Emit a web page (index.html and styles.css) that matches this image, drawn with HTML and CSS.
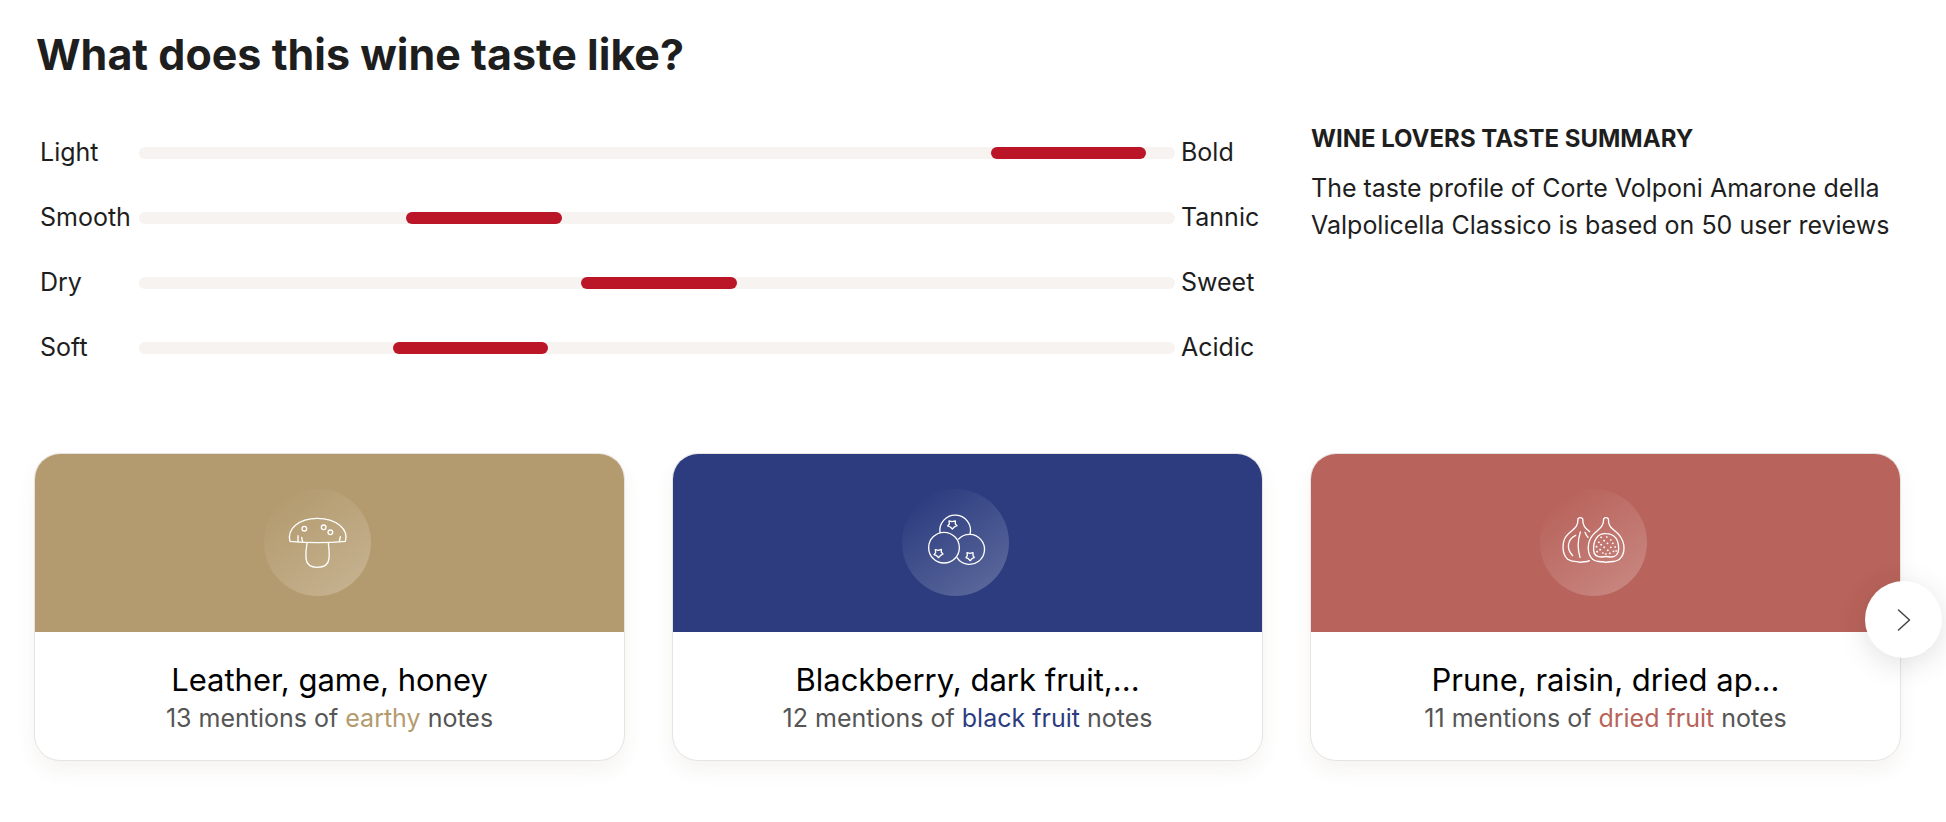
FILE: index.html
```html
<!DOCTYPE html>
<html lang="en">
<head>
<meta charset="utf-8">
<title>What does this wine taste like?</title>
<link rel="stylesheet" href="styles.css">
</head>
<body>
<main class="page">
  <h1 class="title">What does this wine taste like?</h1>

  <section class="overview">
    <table class="scales">
      <tr>
        <th class="scale-low" scope="row">Light</th>
        <td class="scale-track"><div class="track"><div class="fill" style="margin-left:82.2%"></div></div></td>
        <td class="scale-high">Bold</td>
      </tr>
      <tr>
        <th class="scale-low" scope="row">Smooth</th>
        <td class="scale-track"><div class="track"><div class="fill" style="margin-left:25.8%"></div></div></td>
        <td class="scale-high">Tannic</td>
      </tr>
      <tr>
        <th class="scale-low" scope="row">Dry</th>
        <td class="scale-track"><div class="track"><div class="fill" style="margin-left:42.7%"></div></div></td>
        <td class="scale-high">Sweet</td>
      </tr>
      <tr>
        <th class="scale-low" scope="row">Soft</th>
        <td class="scale-track"><div class="track"><div class="fill" style="margin-left:24.5%"></div></div></td>
        <td class="scale-high">Acidic</td>
      </tr>
    </table>

    <aside class="summary">
      <h2 class="summary-title">WINE LOVERS TASTE SUMMARY</h2>
      <p class="summary-text">The taste profile of Corte Volponi Amarone della Valpolicella Classico is based on 50 user reviews</p>
    </aside>
  </section>

  <section class="carousel">
    <article class="card card-earthy">
      <div class="card-banner">
        <div class="card-icon">
          <svg viewBox="42 27 321 321" aria-hidden="true">
            <path d="M120 184C110 148 146 115 202 115S297 148 286 184Q203 192 120 184Z"/>
            <path d="M171 189C168 205 167 220 168 236C170 254 181 262 202 262S235 254 237 236C239 220 237 205 235 189"/>
            <path d="M144 167V185M155 172L158 186M271 170L268 185"/>
            <circle cx="163" cy="146" r="7"/><circle cx="221" cy="142" r="7"/><circle cx="241" cy="157" r="7"/>
          </svg>
        </div>
      </div>
      <div class="card-body">
        <h3 class="card-title">Leather, game, honey</h3>
        <p class="card-note">13 mentions of <span class="card-group">earthy</span> notes</p>
      </div>
    </article>

    <article class="card card-black">
      <div class="card-banner">
        <div class="card-icon">
          <svg viewBox="36 27 321 321" aria-hidden="true">
            <circle cx="162" cy="203" r="46"/>
            <path d="M150 158A46 46 0 1 1 240 163"/>
            <path d="M206 177A45 45 0 1 1 201 233"/>
            <path d="M177 123L186 125L196 123L196 132L201 137L193 141L187 147L181 141L173 138L178 132Z"/>
            <path d="M136 209L145 211L154 208L154 217L159 222L151 227L146 233L140 227L132 224L137 218Z"/>
            <path d="M231 218L240 220L249 218L249 227L253 232L246 236L241 242L235 236L228 233L232 227Z"/>
          </svg>
        </div>
      </div>
      <div class="card-body">
        <h3 class="card-title">Blackberry, dark fruit,...</h3>
        <p class="card-note">12 mentions of <span class="card-group">black fruit</span> notes</p>
      </div>
    </article>

    <article class="card card-dried">
      <div class="card-banner">
        <div class="card-icon">
          <svg viewBox="45 27 321 321" aria-hidden="true">
            <path d="M194 155C182 145 173 140 173 116Q166 110 159 116C159 148 143 145 125 167C109 187 111 222 128 238C143 249 158 242 165 247C176 243 184 248 193 242"/>
            <path d="M236 116Q243 110 250 116C250 148 267 145 284 167C301 190 302 220 283 238C270 249 253 243 243 247C233 243 216 249 203 238C185 220 186 188 202 167C219 146 236 145 236 116Z"/>
            <path d="M152 166C128 178 122 205 143 227M166 156C158 181 157 206 165 232M180 157Q183 166 189 172"/>
            <path d="M243 161C216 159 204 184 206 211C207 227 216 231 230 231Q243 228 256 231C272 231 280 225 281 206C281 180 269 162 243 161Z"/>
            <path class="seeds" d="M228 172h1M245 171h1M257 180h1M237 182h1M221 187h1M247 190h1M263 190h1M228 194h1M214 200h1M237 202h1M257 202h1M270 201h1M225 209h1M248 211h1M265 214h1M216 215h1M233 219h1M242 222h1M254 220h1M273 213h1"/>
          </svg>
        </div>
      </div>
      <div class="card-body">
        <h3 class="card-title">Prune, raisin, dried ap...</h3>
        <p class="card-note">11 mentions of <span class="card-group">dried fruit</span> notes</p>
      </div>
    </article>

    <button class="next" type="button" aria-label="Next">
      <svg viewBox="0 0 48 48" aria-hidden="true"><path d="M13 4L35 24L13 44"/></svg>
    </button>
  </section>
</main>
</body>
</html>
```
FILE: styles.css
```css
* {
  box-sizing: border-box;
}

body {
  margin: 0;
  background: #fff;
  color: #1e1e1e;
  font-family: Inter, "Liberation Sans", sans-serif;
  font-size: 25px;
  line-height: 37px;
}

h1, h2, h3, p {
  margin: 0;
}

.page {
  padding: 28px 45px 60px 34px;
}

.title {
  padding-left: 2px;
  font-size: 43px;
  font-weight: 700;
  line-height: 52px;
}

.overview {
  display: grid;
  grid-template-columns: repeat(3, 1fr);
  gap: 47px;
  margin-top: 40px;
}

.scales {
  grid-column: span 2;
  width: 100%;
  border-collapse: collapse;
}

.scales th,
.scales td {
  height: 65px;
  padding: 0;
  font-weight: 400;
  text-align: left;
}

.scales .scale-low {
  width: 105px;
  padding-left: 6px;
}

.scales .scale-high {
  width: 88px;
  padding-left: 6px;
}

.track {
  height: 12px;
  border-radius: 6px;
  background: #f6f3f0;
}

.fill {
  width: 15%;
  height: 12px;
  border-radius: 6px;
  background: #ba1628;
}

.summary {
  padding-left: 1px;
}

.summary-title {
  font-size: 24px;
  font-weight: 700;
  line-height: 38px;
}

.summary-text {
  margin-top: 12px;
}

.carousel {
  position: relative;
  display: grid;
  grid-template-columns: repeat(3, 1fr);
  gap: 47px;
  margin-top: 73px;
}

.card {
  overflow: hidden;
  border: 1px solid #e6e4e2;
  border-radius: 26px;
  background: #fff;
  box-shadow: 0 10px 20px rgba(80, 60, 30, 0.06);
}

.card-banner {
  display: flex;
  justify-content: center;
  padding: 35px 24px 36px 0;
  background: var(--accent);
}

.card-earthy { --accent: #b49b6f; }
.card-black { --accent: #2c3c7f; }
.card-dried { --accent: #b8635b; }

.card-icon {
  width: 107px;
  height: 107px;
  border-radius: 50%;
  background: linear-gradient(145deg, rgba(255, 255, 255, 0) 12%, rgba(255, 255, 255, 0.25) 100%);
}

.card-icon svg {
  display: block;
  fill: none;
  stroke: #fff;
  stroke-width: 4;
  stroke-linecap: round;
  stroke-linejoin: round;
}

.card-icon .seeds {
  stroke-width: 5;
}

.card-body {
  padding: 27px 24px 23px;
  text-align: center;
}

.card-title {
  color: #000;
  font-size: 31px;
  font-weight: 400;
  line-height: 41px;
}

.card-note {
  color: #555;
}

.card-group {
  color: var(--accent);
}

.next {
  position: absolute;
  top: 128px;
  right: -41px;
  display: flex;
  align-items: center;
  justify-content: center;
  width: 77px;
  height: 77px;
  padding: 0;
  border: 0;
  border-radius: 50%;
  background: #fff;
  box-shadow: 0 6px 30px rgba(0, 0, 0, 0.12);
}

.next svg {
  width: 24px;
  height: 24px;
  fill: none;
  stroke: #444;
  stroke-width: 3;
  stroke-linecap: round;
  stroke-linejoin: round;
}
```
